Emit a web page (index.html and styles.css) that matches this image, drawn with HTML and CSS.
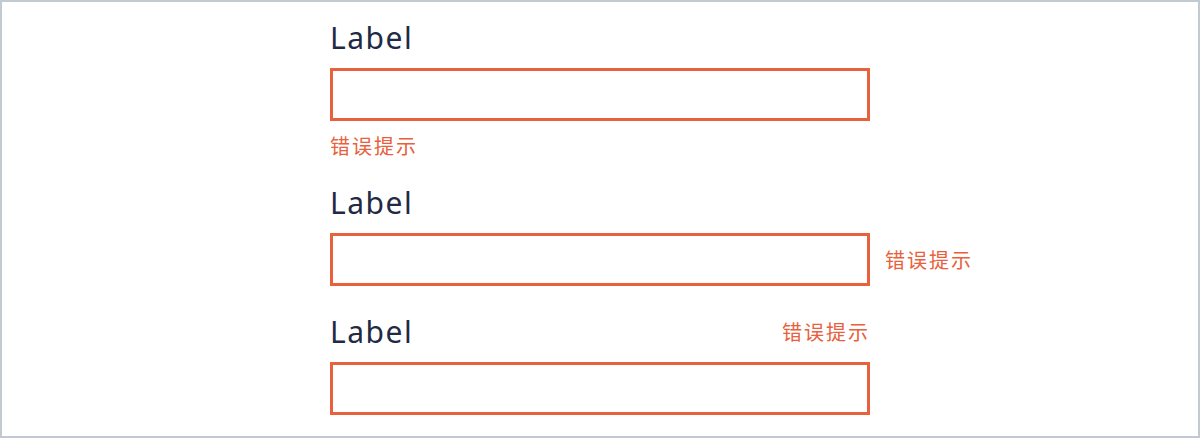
FILE: index.html
```html
<!DOCTYPE html>
<html lang="zh">
<head>
<meta charset="utf-8">
<title>Form errors</title>
<link rel="stylesheet" href="styles.css">
</head>
<body>
<div class="frame">
  <div class="form">
    <div class="item item-below">
      <div class="label">Label</div>
      <input class="field" type="text">
      <div class="error error-below">错误提示</div>
    </div>
    <div class="item item-right">
      <div class="label">Label</div>
      <div class="field-row">
        <input class="field" type="text">
        <div class="error error-right">错误提示</div>
      </div>
    </div>
    <div class="item item-top">
      <div class="label-row">
        <div class="label">Label</div>
        <div class="error">错误提示</div>
      </div>
      <input class="field" type="text">
    </div>
  </div>
</div>
</body>
</html>
```

FILE: styles.css
```css
html, body {
  margin: 0;
  padding: 0;
  background: #ffffff;
}
.frame {
  box-sizing: border-box;
  width: 1200px;
  height: 438px;
  border: 2px solid #c3c9d2;
  padding-top: 16px;
  overflow: hidden;
}
.form {
  width: 540px;
  margin: 0 auto;
}
.label {
  font-family: "Noto Sans", "Open Sans", sans-serif;
  font-size: 30px;
  line-height: 40px;
  letter-spacing: 1.5px;
  color: #1f2a44;
  margin-bottom: 10px;
}
.field {
  display: block;
  box-sizing: border-box;
  width: 540px;
  height: 53px;
  margin: 0;
  padding: 0 12px;
  border: 3px solid #e8603c;
  border-radius: 0;
  background: #ffffff;
  outline: none;
  flex: 0 0 540px;
}
.error {
  font-family: "Noto Sans CJK SC", "Noto Sans", sans-serif;
  font-size: 20px;
  line-height: 28px;
  letter-spacing: 2px;
  color: #e8603c;
}
.item-below .error-below {
  margin-top: 11px;
}
.item-below {
  margin-bottom: 23px;
}
.item-right {
  margin-bottom: 26px;
}
.field-row {
  display: flex;
  align-items: center;
}
.error-right {
  margin-left: 15px;
  white-space: nowrap;
  flex: 0 0 auto;
}
.label-row {
  display: flex;
  justify-content: space-between;
  align-items: center;
  margin-bottom: 10px;
}
.label-row .label {
  margin-bottom: 0;
}
```
